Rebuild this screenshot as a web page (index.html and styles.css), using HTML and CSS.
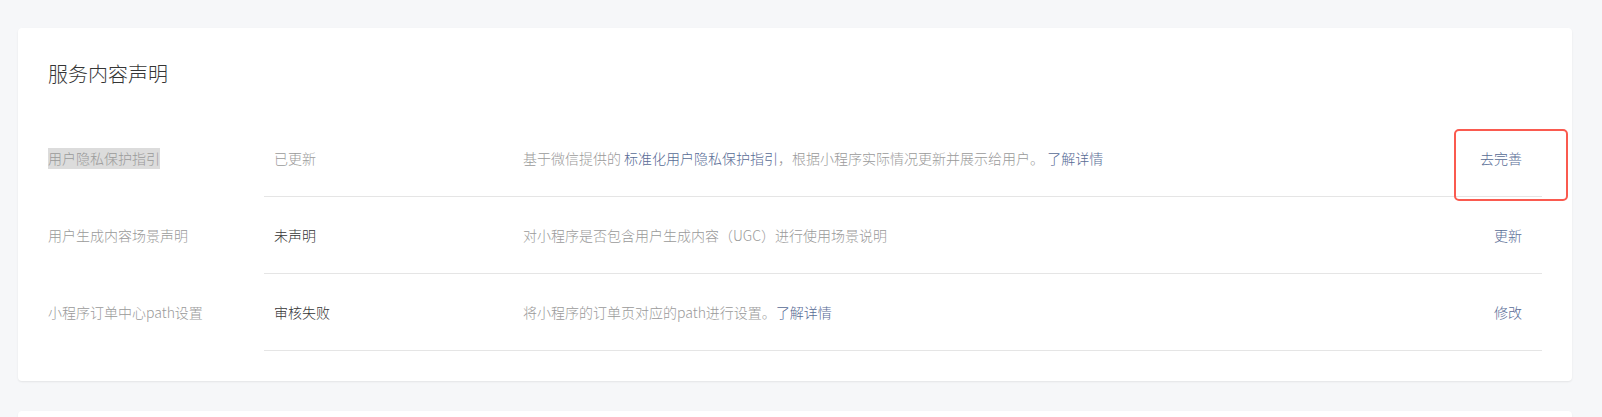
FILE: index.html
```html
<!DOCTYPE html>
<html lang="zh-CN">
<head>
<meta charset="utf-8">
<title>服务内容声明</title>
<link rel="stylesheet" href="styles.css">
</head>
<body>
<div class="page">
  <section class="card">
    <h2 class="card-title">服务内容声明</h2>
    <div class="rows">
      <div class="row">
        <div class="label"><span class="selected">用户隐私保护指引</span></div>
        <div class="cells">
          <div class="status muted">已更新</div>
          <div class="desc">基于微信提供的 <a class="link">标准化用户隐私保护指引</a>，根据小程序实际情况更新并展示给用户。 <a class="link">了解详情</a></div>
          <div class="action"><a class="link">去完善</a><span class="mark"></span></div>
        </div>
      </div>
      <div class="row">
        <div class="label">用户生成内容场景声明</div>
        <div class="cells">
          <div class="status">未声明</div>
          <div class="desc">对小程序是否包含用户生成内容（UGC）进行使用场景说明</div>
          <div class="action"><a class="link">更新</a></div>
        </div>
      </div>
      <div class="row">
        <div class="label">小程序订单中心path设置</div>
        <div class="cells">
          <div class="status">审核失败</div>
          <div class="desc">将小程序的订单页对应的path进行设置。<a class="link">了解详情</a></div>
          <div class="action"><a class="link">修改</a></div>
        </div>
      </div>
    </div>
  </section>
  <section class="card card-next"></section>
</div>
</body>
</html>
```

FILE: styles.css
```css
* { box-sizing: border-box; }
html, body { margin: 0; padding: 0; }
body {
  background: #f6f7f9;
  font-family: "PingFang SC", "Noto Sans CJK SC", "Noto Sans", sans-serif;
  font-size: 14px;
  font-weight: 300;
  color: #353535;
  overflow: hidden;
  height: 417px;
}
.page {
  padding: 28px 30px 0 18px;
}
.card {
  background: #fff;
  border-radius: 4px;
  box-shadow: 0 1px 2px rgba(0, 0, 0, 0.08);
  padding: 34px 30px 30px;
}
.card-title {
  margin: 0 0 34px;
  font-size: 20px;
  line-height: 24px;
  font-weight: 300;
  color: #353535;
}
.row {
  display: grid;
  grid-template-columns: 216px 1fr;
}
.label {
  display: flex;
  align-items: center;
  color: #9a9a9a;
  line-height: 21px;
}
.selected {
  background: #dcdcdc;
}
.cells {
  display: flex;
  align-items: center;
  height: 77px;
  border-bottom: 1px solid #e5e5e5;
}
.status {
  width: 259px;
  flex: none;
  padding-left: 10px;
  color: #353535;
}
.status.muted { color: #9a9a9a; }
.desc {
  flex: 1;
  color: #9a9a9a;
  white-space: nowrap;
}
.link {
  color: #576b95;
  text-decoration: none;
  cursor: pointer;
}
.action {
  position: relative;
  padding-right: 20px;
  text-align: right;
}
.mark {
  position: absolute;
  left: -26px;
  top: -19px;
  width: 114px;
  height: 72px;
  border: 2.5px solid #fa5a4f;
  border-radius: 5px;
  pointer-events: none;
}
.card-next {
  margin-top: 30px;
  height: 6px;
  padding: 0;
  border-radius: 4px 4px 0 0;
}
```
